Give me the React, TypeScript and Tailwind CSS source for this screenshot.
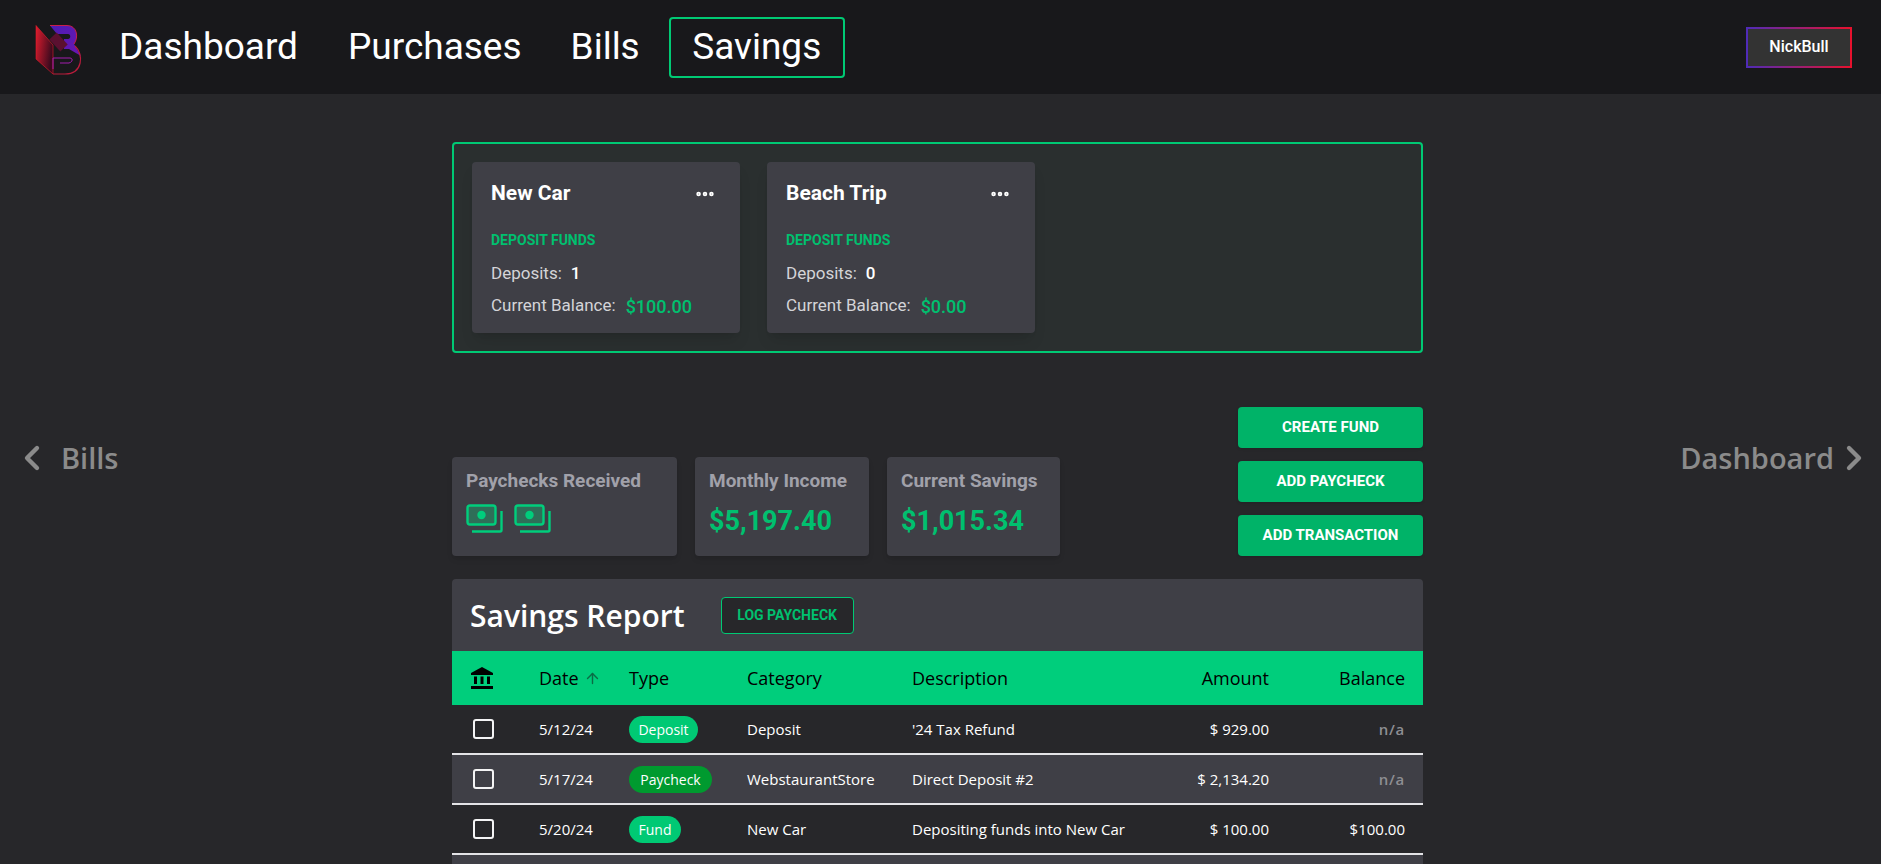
import React from 'react';
import { ChevronLeft, ChevronRight, ArrowUp, Ellipsis } from 'lucide-react';

const Logo = () => (
  <svg viewBox="0 0 80 70" className="w-[80px] h-[70px] shrink-0 -mx-[1px]">
    <defs>
      <linearGradient id="n" x1="0" y1="0" x2="1" y2="0.4">
        <stop offset="0" stopColor="#e11d2e" />
        <stop offset="1" stopColor="#3b0a1e" />
      </linearGradient>
      <linearGradient id="b" x1="0" y1="0" x2="1" y2="1">
        <stop offset="0" stopColor="#4c1db5" />
        <stop offset="1" stopColor="#6a15b0" />
      </linearGradient>
    </defs>
    <path d="M19 13.5 L36 33 V62 L19 47 Z" fill="url(#n)" stroke="#e11d2e" strokeWidth="0.6" />
    <path d="M33 13.5 H50 C60 13.5 62 25 57 32 L64 44 L52 37 L47 37 L47 27 H51 C54 27 54 22 51 22 H40 Z" fill="url(#b)" />
    <path d="M33 13.5 H50 C60 13.5 62 25 57 32" fill="none" stroke="#c81e4a" strokeWidth="1" />
    <path d="M47 36 L36 24" stroke="#5b1030" strokeWidth="10" />
    <path d="M36 57 V46 H53 C56 46 56 50 52 51 H43" fill="none" stroke="#a21caf" strokeWidth="1" />
    <path d="M58 34 C67 42 66 62 48 62 H36" fill="none" stroke="#b91c3c" strokeWidth="1.2" />
  </svg>
);

const Bills = () => (
  <svg viewBox="0 0 38 30" className="w-[38px] h-[30px]" fill="none" stroke="#00ce7c" strokeWidth="2.4">
    <rect x="1.5" y="1.5" width="28" height="19" rx="2.5" fill="#2f6e58" />
    <circle cx="15.5" cy="11" r="4.2" fill="#00ce7c" stroke="none" />
    <path d="M35.5 7 V26 A1.5 1.5 0 0 1 34 27.5 H6" />
  </svg>
);

const BankIcon = () => (
  <svg viewBox="0 0 24 24" className="w-[24px] h-[24px]" fill="currentColor">
    <path d="M12 1 L23 7 V9 H1 V7 Z" />
    <rect x="4" y="10.5" width="3" height="7.5" />
    <rect x="10.5" y="10.5" width="3" height="7.5" />
    <rect x="17" y="10.5" width="3" height="7.5" />
    <rect x="1" y="20" width="22" height="3" />
  </svg>
);

const FundCard = ({ name, deposits, balance }: { name: string; deposits: string; balance: string }) => (
  <div className="w-[268px] h-[171px] rounded bg-[#3f3f46] shadow-lg px-[19px] pt-[16px]">
    <div className="flex items-center justify-between h-[32px] pr-[5px]">
      <span className="text-[21px] font-bold text-white">{name}</span>
      <Ellipsis className="w-[22px] h-[22px] text-white" strokeWidth={3} />
    </div>
    <div className="mt-[21px] text-[14px] leading-[18px] font-bold text-[#00c06f]">DEPOSIT FUNDS</div>
    <div className="mt-[13px] flex items-center h-[24px] text-[17px] text-[#d4d4d8]">
      Deposits:<span className="ml-[9px] font-medium text-white">{deposits}</span>
    </div>
    <div className="mt-[8px] flex items-center h-[24px] text-[17px] text-[#d4d4d8]">
      Current Balance:<span className="ml-[10px] text-[18px] font-medium text-[#00c06f]">{balance}</span>
    </div>
  </div>
);

const Stat = ({ title, className, children }: { title: string; className: string; children: React.ReactNode }) => (
  <div className={`h-[99px] rounded bg-[#3f3f46] shadow-md px-[14px] pt-[10px] ${className}`}>
    <div className="text-[19px] leading-[28px] font-bold text-[#a1a1aa] whitespace-nowrap">{children ? title : title}</div>
    {children}
  </div>
);

const ActionButton = ({ label }: { label: string }) => (
  <button className="w-[185px] h-[41px] rounded bg-[#00b368] shadow text-[15px] font-bold text-white">{label}</button>
);

const rows = [
  { date: '5/12/24', type: 'Deposit', pill: 'bg-[#00c974] w-[69px]', category: 'Deposit', description: "'24 Tax Refund", amount: '$ 929.00', balance: 'n/a' },
  { date: '5/17/24', type: 'Paycheck', pill: 'bg-[#009a2f] w-[83px]', category: 'WebstaurantStore', description: 'Direct Deposit #2', amount: '$ 2,134.20', balance: 'n/a' },
  { date: '5/20/24', type: 'Fund', pill: 'bg-[#00c974] w-[52px]', category: 'New Car', description: 'Depositing funds into New Car', amount: '$ 100.00', balance: '$100.00' },
];

const cols = 'grid grid-cols-[87px_90px_118px_165px_230px_127px_154px] items-center';

export default function App() {
  return (
    <div className="h-screen overflow-hidden bg-[#27272a] font-['Roboto',sans-serif] text-white">
      <header className="h-[94px] bg-[#18181b] flex items-center pl-[18px] pr-[29px]">
        <Logo />
        <nav className="ml-[23px] flex items-center text-[37px] leading-[44px] text-white">
          <a className="mr-[50px] ">Dashboard</a>
          <a className="mr-[49px] ">Purchases</a>
          <a className="mr-[29px] ">Bills</a>
          <a className="w-[176px] h-[61px] flex items-center justify-center rounded border-2 border-[#00c974]">Savings</a>
        </nav>
        <button className="ml-auto w-[106px] h-[41px] bg-[#333333] border-2 text-[16px] font-medium text-white [border-image:linear-gradient(90deg,#4f2bb8,#e8112d)_1]">NickBull</button>
      </header>

      <main className="flex">
        <div className="w-[452px] pt-[344px] pl-[14px]">
          <a className="flex items-center text-[#8b8b8b] font-['Open_Sans',sans-serif] font-semibold text-[29px] leading-[40px]">
            <ChevronLeft className="w-[40px] h-[40px] mr-[9px] -ml-[2px]" strokeWidth={2.6} />
            Bills
          </a>
        </div>

        <div className="w-[971px] pt-[48px]">
          <section className="h-[211px] rounded border-2 border-[#00c974] bg-[#2a2f2f] p-[18px] flex gap-[27px]">
            <FundCard name="New Car" deposits="1" balance="$100.00" />
            <FundCard name="Beach Trip" deposits="0" balance="$0.00" />
          </section>

          <div className="mt-[54px] flex items-end justify-between">
            <div className="flex gap-[18px]">
              <Stat title="Paychecks Received" className="w-[225px]">
                <div className="mt-[9px] flex gap-[10px]">
                  <Bills />
                  <Bills />
                </div>
              </Stat>
              <Stat title="Monthly Income" className="w-[174px]">
                <div className="mt-[8px] text-[27px] leading-[36px] font-bold text-[#00c06f]">$5,197.40</div>
              </Stat>
              <Stat title="Current Savings" className="w-[173px]">
                <div className="mt-[8px] text-[27px] leading-[36px] font-bold text-[#00c06f]">$1,015.34</div>
              </Stat>
            </div>
            <div className="flex flex-col gap-[13px]">
              <ActionButton label="CREATE FUND" />
              <ActionButton label="ADD PAYCHECK" />
              <ActionButton label="ADD TRANSACTION" />
            </div>
          </div>

          <section className="mt-[23px] rounded-t overflow-hidden bg-[#3f3f46]">
            <div className="h-[72px] flex items-center pl-[18px]">
              <h2 className="text-[30px] font-semibold font-['Open_Sans',sans-serif] text-white">Savings Report</h2>
              <button className="ml-[36px] w-[133px] h-[37px] rounded-sm bg-[#27272a] border border-[#00c974] text-[14px] font-bold text-[#00c06f]">LOG PAYCHECK</button>
            </div>
            <div className={`${cols} h-[54px] bg-[#00ce7c] text-black text-[18px] font-['Open_Sans',sans-serif]`}>
              <div className="pl-[18px]"><BankIcon /></div>
              <div className="flex items-center">Date<ArrowUp className="w-[17px] h-[17px] ml-[5px] text-[#0b6b45]" /></div>
              <div>Type</div>
              <div>Category</div>
              <div>Description</div>
              <div className="text-right">Amount</div>
              <div className="text-right pr-[18px]">Balance</div>
            </div>
            {rows.map((r, i) => (
              <div
                key={r.date}
                className={`${cols} h-[50px] border-b-2 border-[#e4e4e7] text-[15px] font-['Open_Sans',sans-serif] ${i === 1 ? 'bg-[#3f3f46]' : 'bg-[#27272a]'}`}
              >
                <div className="pl-[21px]"><div className="w-[21px] h-[20px] rounded-[3px] border-2 border-[#f4f4f5]" /></div>
                <div>{r.date}</div>
                <div><span className={`inline-flex items-center justify-center h-[27px] rounded-full text-[14px] ${r.pill}`}>{r.type}</span></div>
                <div>{r.category}</div>
                <div>{r.description}</div>
                <div className="text-right">{r.amount}</div>
                <div className={`text-right pr-[18px] ${r.balance === 'n/a' ? 'text-[#8e8e93] font-semibold tracking-wider' : ''}`}>{r.balance}</div>
              </div>
            ))}
            <div className="h-[50px] bg-[#3f3f46]" />
          </section>
        </div>

        <div className="flex-1 pt-[344px] pr-[15px] flex justify-end items-start">
          <a className="flex items-center text-[#8b8b8b] font-['Open_Sans',sans-serif] font-semibold text-[29px] leading-[40px]">
            Dashboard
            <ChevronRight className="w-[40px] h-[40px] -mr-[8px]" strokeWidth={2.6} />
          </a>
        </div>
      </main>
    </div>
  );
}
